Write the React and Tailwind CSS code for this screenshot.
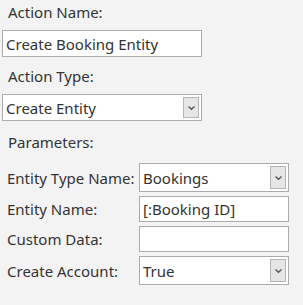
import React from "react";

const Chevron = () => (
  <svg width="9" height="6" viewBox="0 0 9 6">
    <path d="M1.5 1.5 L4.5 4.3 L7.5 1.5" fill="none" stroke="#555" strokeWidth="1.4" />
  </svg>
);

const TextBox = ({ value, className }) => (
  <div className={`flex items-center bg-white border border-[#ababab] pl-[3px] ${className}`}>
    <span className="whitespace-nowrap">{value}</span>
  </div>
);

const SelectBox = ({ value, className }) => (
  <div className={`flex items-center bg-white border border-[#ababab] pl-[3px] pr-[2px] ${className}`}>
    <span className="flex-1 whitespace-nowrap">{value}</span>
    <div className="w-[16px] h-[calc(100%-4px)] flex items-center justify-center bg-[#e6e6e6] border border-[#b4b4b4]">
      <Chevron />
    </div>
  </div>
);

const App = () => {
  const params = [
    { label: "Entity Type Name:", value: "Bookings", select: true, h: "h-[29px]" },
    { label: "Entity Name:", value: "[:Booking ID]", h: "h-[26px]" },
    { label: "Custom Data:", value: "", h: "h-[26px]" },
    { label: "Create Account:", value: "True", select: true, h: "h-[29px]" },
  ];
  return (
    <div
      className="w-[303px] h-[305px] bg-[#f3f3f3] text-[#333333] text-[15px] leading-[20px] pt-[2px]"
      style={{ fontFamily: '"Noto Sans", "Open Sans", sans-serif' }}
    >
      <div className="pl-[8px] h-[20px]">Action Name:</div>
      <TextBox value="Create Booking Entity" className="ml-[2px] mt-[8px] w-[200px] h-[27px]" />
      <div className="pl-[8px] mt-[9px] h-[20px]">Action Type:</div>
      <SelectBox value="Create Entity" className="ml-[2px] mt-[8px] w-[200px] h-[27px]" />
      <div className="pl-[8px] mt-[11px] h-[20px]">Parameters:</div>
      <div className="mt-[11px] flex flex-col gap-[4px]">
        {params.map((p) => (
          <div key={p.label} className="flex items-center">
            <div className="w-[139px] pl-[7px] whitespace-nowrap">{p.label}</div>
            {p.select ? (
              <SelectBox value={p.value} className={`w-[150px] ${p.h}`} />
            ) : (
              <TextBox value={p.value} className={`w-[150px] ${p.h}`} />
            )}
          </div>
        ))}
      </div>
    </div>
  );
};

export default App;
